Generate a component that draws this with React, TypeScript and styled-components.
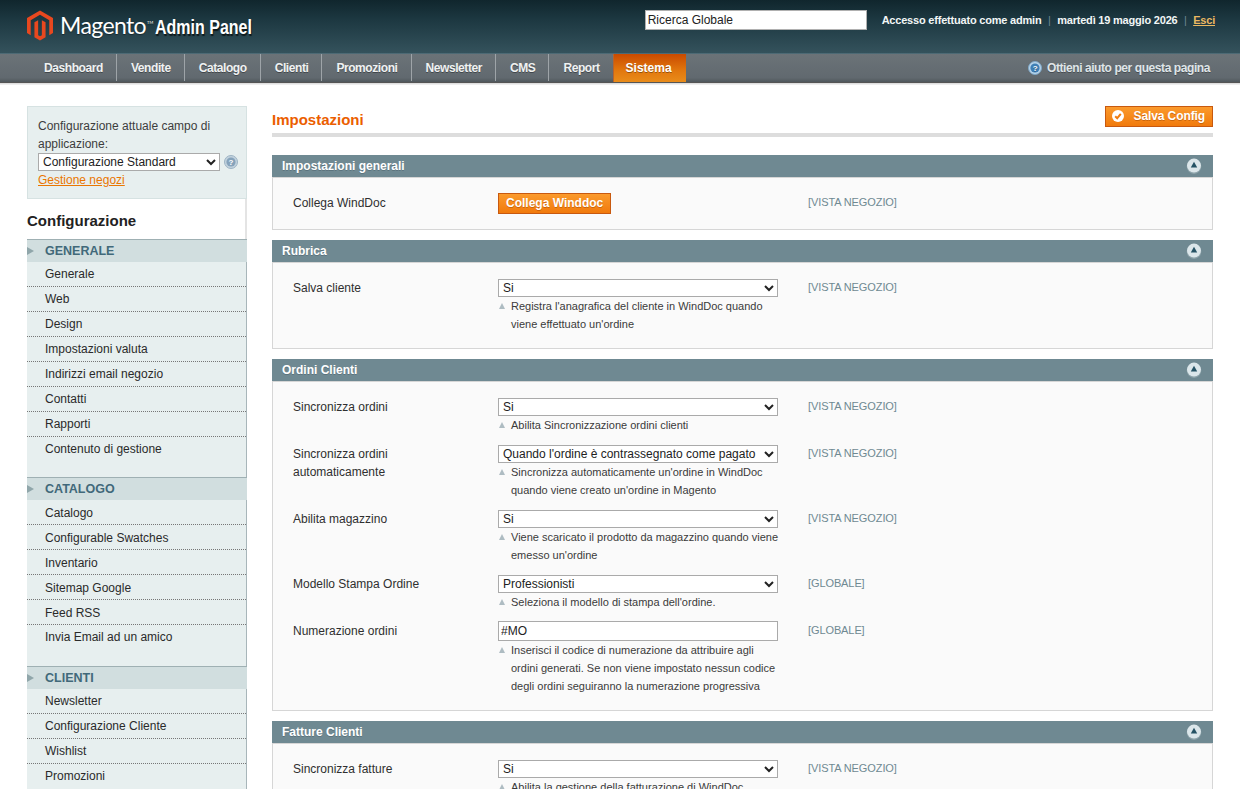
import React from "react";
import styled, { createGlobalStyle } from "styled-components";

const Global = createGlobalStyle`
  html, body { margin: 0; padding: 0; height: 789px; overflow: hidden; background: #fff; }
  body { font: 12px/18px "Liberation Sans", Arial, sans-serif; color: #2f2f2f; }
  * { box-sizing: border-box; }
`;

const Page = styled.div`height: 789px; overflow: hidden;`;

const Header = styled.header`
  height: 54px;
  padding: 10px 25px 0 27px;
  display: flex;
  justify-content: space-between;
  align-items: flex-start;
  background: linear-gradient(#10262d 0%, #1c3740 35%, #34525c 100%);
  border-bottom: 1px solid #4d6a75;
`;
const Logo = styled.div`display: flex; align-items: center; height: 31px; color: #fff;`;
const LogoWord = styled.span`
  font: 400 23px/31px "Lato", sans-serif;
  letter-spacing: -.6px;
  margin-left: 7px;
  text-shadow: 0 1px 1px rgba(0,0,0,.4);
`;
const Tm = styled.sup`font-size: 4px; line-height: 4px; letter-spacing: 0; margin-left: 1px; vertical-align: 10px;`;
const LogoSub = styled.span`
  display: inline-block;
  font: 700 20px/31px "Liberation Sans", sans-serif;
  margin: 3px 0 0 2px;
  width: 96px;
  white-space: nowrap;
  transform: scaleX(.8);
  transform-origin: left center;
  text-shadow: 1px 2px 1px rgba(0,0,0,.65);
`;
const HeaderRight = styled.div`display: flex; align-items: center; height: 20px;`;
const Search = styled.input`
  width: 222px; height: 20px; padding: 0 2px; margin-right: 15px;
  border: 1px solid #b0b0b0; background: #fff; color: #222;
  font: 12px "Liberation Sans", sans-serif;
`;
const Meta = styled.div`display: flex; font: 700 11px/18px "Liberation Sans", sans-serif; letter-spacing: -.2px; color: #f2f6f6; white-space: nowrap;`;
const Sep = styled.span`color: #6f8992; font-weight: 400; margin: 0 6.5px;`;
const Logout = styled.a`color: #ebb861; text-decoration: underline;`;

const Nav = styled.nav`
  height: 28px;
  padding: 0 30px;
  display: flex;
  align-items: stretch;
  background: linear-gradient(#6b7378, #61696f 85%, #4f575c);
`;
const NavItem = styled.a<{ $last?: boolean }>`
  display: flex; align-items: center;
  padding: 0 13px 0 14px;
  font: 700 12px/18px "Liberation Sans", sans-serif;
  letter-spacing: -.42px;
  color: #f0f2f2;
  border-right: ${p => (p.$last ? "0" : "1px solid #9ea4a8")};
  margin-bottom: 1px;
  text-shadow: 0 1px 0 rgba(0,0,0,.35);
`;
const NavActive = styled.a`
  display: flex; align-items: center;
  padding: 0 14px 0 12px;
  font: 700 12px/18px "Liberation Sans", sans-serif;
  color: #fff;
  background: linear-gradient(#c94a00, #e2780e 60%, #e98c1a);
  border-left: 1px solid #b8632c;
  text-shadow: 0 1px 0 rgba(0,0,0,.35);
`;
const NavHelp = styled.a`
  margin-left: auto;
  display: flex; align-items: center; gap: 5px;
  font: 700 12px/18px "Liberation Sans", sans-serif;
  letter-spacing: -.42px;
  color: #dfe5e8;
  text-shadow: 0 1px 0 rgba(0,0,0,.3);
`;
const NavShadow = styled.div`height: 3px; background: #dedede; border-top: 1px solid #555; border-bottom: 1px solid #eee;`;

const Columns = styled.div`
  display: grid;
  grid-template-columns: 220px 941px;
  column-gap: 25px;
  padding: 21px 27px 0;
`;

const Sidebar = styled.aside`display: flex; flex-direction: column;`;
const ScopeBox = styled.div`
  height: 93px;
  padding: 10px 8px 0 10px;
  background: #e7efef;
  border: 1px solid #d6e2e2;
  color: #3d3d3d;
`;
const ScopeRow = styled.div`display: flex; align-items: center; gap: 4px; height: 18px;`;
const Select = styled.select<{ $w?: number }>`
  flex: none;
  width: ${p => p.$w ?? 280}px; height: 18px; padding: 0;
  margin: 0;
  border: 1px solid #aaa; background: #fff; color: #222;
  font: 12px "Liberation Sans", sans-serif;
`;
const ScopeLink = styled.a`color: #ea7601; text-decoration: underline; display: block;`;
const ConfigTitle = styled.h3`
  margin: 0; height: 40px;
  font: 700 15px/44px "Liberation Sans", sans-serif;
  color: #222;
  background: #fff;
  border-right: 2px solid #e4e4e4;
`;
const MenuHead = styled.div`
  height: 23px; position: relative;
  padding-left: 18px;
  background: #d1dedf;
  border-top: 1px solid #9fb0b3;
  font: 700 12.5px/22px "Liberation Sans", sans-serif;
  color: #41697a;
  &::before {
    content: ""; position: absolute; left: 0; top: 7px;
    border-left: 7px solid #90a6aa;
    border-top: 4px solid transparent;
    border-bottom: 4px solid transparent;
  }
`;
const MenuList = styled.ul<{ $pad: number; $lh: number }>`
  list-style: none; margin: 0; padding: 0 0 ${p => p.$pad}px;
  background: #e7efef;
  border-right: 1px solid #a8b6ba;
  line-height: ${p => p.$lh}px;
`;
const MenuItem = styled.li`
  height: 25px; padding-left: 18px;
  font-size: 12px; color: #2a2a2a;
  border-bottom: 1px dotted #777;
  &:last-child { border-bottom: 0; line-height: 24px; }
`;

const Main = styled.main`display: flex; flex-direction: column;`;
const TitleBar = styled.div`
  height: 31px;
  display: flex; justify-content: space-between; align-items: flex-start;
  border-bottom: 4px solid #ddd;
  margin-bottom: 18px;
`;
const Title = styled.h3`margin: 5px 0 0; font: 700 15px/18px "Liberation Sans", sans-serif; color: #eb5e00;`;
const OrangeButton = styled.button`
  display: inline-flex; align-items: center; gap: 8px;
  height: 21px; padding: 0 7px 2px;
  border: 1px solid #c8590f;
  background: linear-gradient(#fb9a2c, #f17a0c);
  color: #fff;
  font: 700 12px/18px "Liberation Sans", sans-serif;
  text-shadow: 0 1px 0 rgba(160,70,0,.5);
`;
const SaveButton = styled(OrangeButton)`
  gap: 10px; padding: 0 7px 2px 6px; letter-spacing: -.1px;
`;
const Section = styled.section`margin-bottom: 10px;`;
const SectionHead = styled.div`
  height: 22px;
  display: flex; justify-content: space-between; align-items: center;
  padding: 0 11px 0 10px;
  background: #6f8992;
  color: #fff;
  font: 700 12px/18px "Liberation Sans", sans-serif;
  text-shadow: 0 1px 0 rgba(60,80,90,.4);
`;
const SectionBody = styled.div`
  display: flex; flex-direction: column; row-gap: 10px;
  padding: 15px 20px;
  background: #fafafa;
  border: 1px solid #d6d6d6;
`;
const Row = styled.div`
  display: grid;
  grid-template-columns: 205px 280px 1fr;
`;
const Label = styled.div`padding-top: 1px; width: 150px; color: #2f2f2f;`;
const Value = styled.div`display: flex; flex-direction: column;`;
const SelectWrap = styled.div`padding-top: 1px; height: 19px;`;
const TextInput = styled.input`
  width: 280px; height: 20px; padding: 0 2px; margin: 0;
  border: 1px solid #aaa; background: #fff; color: #222;
  font: 12px "Liberation Sans", sans-serif;
`;
const Note = styled.div`
  position: relative;
  padding-left: 13px;
  white-space: nowrap;
  font-size: 11px; line-height: 18px; color: #3a3a3a;
  &::before {
    content: ""; position: absolute; left: 1px; top: 6px;
    border-bottom: 6px solid #aebcc2;
    border-left: 3.5px solid transparent;
    border-right: 3.5px solid transparent;
  }
`;
const Scope = styled.div`
  padding: 0 0 0 30px;
  font-size: 11px; line-height: 18px; letter-spacing: -.1px; color: #6f8992;
`;

const HexLogo = () => (
  <svg width="26" height="31" viewBox="1.6 0 20.8 24" aria-hidden="true">
    <path fill="#e8481f" d="M12 24l-4.455-2.572v-12l2.97-1.715v12.001L12 20.57l1.485-.856V7.713l2.97 1.715v12L12 24zM22.391 6v12l-2.969 1.714V7.713L12 3.43 4.574 7.713v12.001L1.609 18V6L12 0l10.391 6z" />
  </svg>
);
const HelpIcon = ({ muted }: { muted?: boolean }) => (
  <svg width="14" height="14" viewBox="0 0 14 14" aria-hidden="true">
    <circle cx="7" cy="7" r="6.5" fill={muted ? "#c3d3de" : "#b8d4ea"} stroke={muted ? "#9db3c4" : "#7ea6c6"} />
    <circle cx="7" cy="7" r="4.6" fill={muted ? "#86a3bb" : "#3f7fb5"} />
    <text x="7" y="10" textAnchor="middle" fontSize="8" fontWeight="700" fontFamily="Liberation Sans" fill="#fff">?</text>
  </svg>
);
const CheckIcon = () => (
  <svg width="12" height="12" viewBox="0 0 12 12" aria-hidden="true">
    <circle cx="6" cy="6" r="6" fill="#fff" />
    <path d="M3.2 6.2 5.2 8.2 8.8 3.9" fill="none" stroke="#f07c10" strokeWidth="2" />
  </svg>
);
const CollapseIcon = () => (
  <svg width="16" height="16" viewBox="0 0 16 16" aria-hidden="true">
    <circle cx="8" cy="8.6" r="7.3" fill="#8ea4ab" />
    <circle cx="8" cy="7.6" r="7" fill="#dbe6ea" />
    <path d="M8 3.8 11.2 9.5H4.8z" fill="#255264" />
  </svg>
);

type RowData = { label: string; kind?: "select" | "input" | "button"; value: string; notes?: string[]; scope: string };
type SectionData = { title: string; rows: RowData[] };

const sections: SectionData[] = [
  { title: "Impostazioni generali", rows: [{ label: "Collega WindDoc", kind: "button", value: "Collega Winddoc", scope: "[VISTA NEGOZIO]" }] },
  { title: "Rubrica", rows: [{ label: "Salva cliente", value: "Si", notes: ["Registra l'anagrafica del cliente in WindDoc quando", "viene effettuato un'ordine"], scope: "[VISTA NEGOZIO]" }] },
  { title: "Ordini Clienti", rows: [
    { label: "Sincronizza ordini", value: "Si", notes: ["Abilita Sincronizzazione ordini clienti"], scope: "[VISTA NEGOZIO]" },
    { label: "Sincronizza ordini automaticamente", value: "Quando l'ordine è contrassegnato come pagato", notes: ["Sincronizza automaticamente un'ordine in WindDoc", "quando viene creato un'ordine in Magento"], scope: "[VISTA NEGOZIO]" },
    { label: "Abilita magazzino", value: "Si", notes: ["Viene scaricato il prodotto da magazzino quando viene", "emesso un'ordine"], scope: "[VISTA NEGOZIO]" },
    { label: "Modello Stampa Ordine", value: "Professionisti", notes: ["Seleziona il modello di stampa dell'ordine."], scope: "[GLOBALE]" },
    { label: "Numerazione ordini", kind: "input", value: "#MO", notes: ["Inserisci il codice di numerazione da attribuire agli", "ordini generati. Se non viene impostato nessun codice", "degli ordini seguiranno la numerazione progressiva"], scope: "[GLOBALE]" },
  ] },
  { title: "Fatture Clienti", rows: [{ label: "Sincronizza fatture", value: "Si", notes: ["Abilita la gestione della fatturazione di WindDoc"], scope: "[VISTA NEGOZIO]" }] },
];

const menus = [
  { head: "GENERALE", pad: 15, lh: 24, items: ["Generale", "Web", "Design", "Impostazioni valuta", "Indirizzi email negozio", "Contatti", "Rapporti", "Contenuto di gestione"] },
  { head: "CATALOGO", pad: 16, lh: 26, items: ["Catalogo", "Configurable Swatches", "Inventario", "Sitemap Google", "Feed RSS", "Invia Email ad un amico"] },
  { head: "CLIENTI", pad: 15, lh: 24, items: ["Newsletter", "Configurazione Cliente", "Wishlist", "Promozioni"] },
];

const navItems = ["Dashboard", "Vendite", "Catalogo", "Clienti", "Promozioni", "Newsletter", "CMS", "Report"];

export default function App() {
  return (
    <Page>
      <Global />
      <Header>
        <Logo>
          <HexLogo />
          <LogoWord>Magento<Tm>TM</Tm></LogoWord>
          <LogoSub>Admin Panel</LogoSub>
        </Logo>
        <HeaderRight>
          <Search defaultValue="Ricerca Globale" />
          <Meta>
            Accesso effettuato come admin<Sep>|</Sep>martedì 19 maggio 2026<Sep>|</Sep><Logout>Esci</Logout>
          </Meta>
        </HeaderRight>
      </Header>
      <Nav>
        {navItems.map((n, i) => (
          <NavItem key={n} $last={i === navItems.length - 1}>{n}</NavItem>
        ))}
        <NavActive>Sistema</NavActive>
        <NavHelp><HelpIcon />Ottieni aiuto per questa pagina</NavHelp>
      </Nav>
      <NavShadow />
      <Columns>
        <Sidebar>
          <ScopeBox>
            Configurazione attuale campo di applicazione:
            <ScopeRow>
              <Select $w={182} defaultValue="Configurazione Standard">
                <option>Configurazione Standard</option>
              </Select>
              <HelpIcon muted />
            </ScopeRow>
            <ScopeLink>Gestione negozi</ScopeLink>
          </ScopeBox>
          <ConfigTitle>Configurazione</ConfigTitle>
          {menus.map(m => (
            <React.Fragment key={m.head}>
              <MenuHead>{m.head}</MenuHead>
              <MenuList $pad={m.pad} $lh={m.lh}>
                {m.items.map(it => <MenuItem key={it}>{it}</MenuItem>)}
              </MenuList>
            </React.Fragment>
          ))}
        </Sidebar>
        <Main>
          <TitleBar>
            <Title>Impostazioni</Title>
            <SaveButton><CheckIcon />Salva Config</SaveButton>
          </TitleBar>
          {sections.map(s => (
            <Section key={s.title}>
              <SectionHead>{s.title}<CollapseIcon /></SectionHead>
              <SectionBody>
                {s.rows.map(r => (
                  <Row key={r.label}>
                    <Label>{r.label}</Label>
                    <Value>
                      {r.kind === "button" ? (
                        <div><OrangeButton>{r.value}</OrangeButton></div>
                      ) : r.kind === "input" ? (
                        <TextInput defaultValue={r.value} />
                      ) : (
                        <SelectWrap>
                          <Select defaultValue={r.value}><option>{r.value}</option></Select>
                        </SelectWrap>
                      )}
                      {r.notes && <Note>{r.notes.map((l, i) => <React.Fragment key={i}>{l}<br /></React.Fragment>)}</Note>}
                    </Value>
                    <Scope>{r.scope}</Scope>
                  </Row>
                ))}
              </SectionBody>
            </Section>
          ))}
        </Main>
      </Columns>
    </Page>
  );
}
